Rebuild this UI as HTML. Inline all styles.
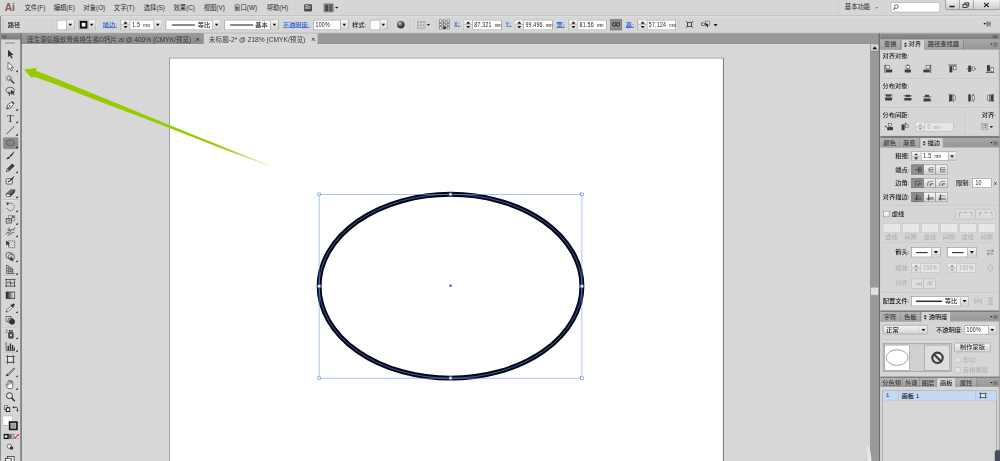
<!DOCTYPE html><html lang="zh-CN"><head><meta charset="utf-8"><title>Adobe Illustrator</title><style>
html,body{margin:0;padding:0;background:#d6d6d6;overflow:hidden}
body{width:1000px;height:461px;position:relative}
#r{position:absolute;left:0;top:0;width:1920px;height:885px;transform:scale(0.5208333);transform-origin:0 0;filter:blur(0.55px);font:12px "Liberation Sans","Noto Sans CJK SC",sans-serif;color:#1c1c1c;overflow:hidden}
#r div,#r span,#r svg{position:absolute;box-sizing:border-box}
.t{white-space:nowrap;line-height:16px;height:16px;font-weight:500}
.m{font-size:12.2px;color:#2b2b2b;font-weight:400}
.bl{color:#2a5bd7;text-decoration:underline}
.f{background:#fff;border:1px solid #787878;box-shadow:0 0 0 1px rgba(255,255,255,.35)}
.fd{background:#e6e6e6;border:1px solid #b4b4b4}
.g{background:linear-gradient(#f6f6f6,#cfcfcf);border-left:1px solid #868686}
.gs{background:linear-gradient(#f6f6f6,#d4d4d4);border-right:1px solid #868686}
.mono{font:12.5px "Liberation Sans",sans-serif;transform:scaleX(.8);transform-origin:0 50%;color:#1a1a1a;white-space:nowrap;line-height:14px;letter-spacing:.55px;word-spacing:3.500px;padding-left:1px}
.mono i{font-size:10px;font-style:normal;letter-spacing:-.6px}
.sep{width:1px;background:#bdbdbd;box-shadow:1px 0 0 #e6e6e6}
.hs{height:1px;background:#bcbcbc;box-shadow:0 1px 0 #e4e4e4}
.tab{height:18px;border-right:1px solid #7a7a7a;background:linear-gradient(#b4b4b4,#a2a2a2);color:#3a3a3a;line-height:18px;white-space:nowrap;text-align:center;font-size:12px;font-weight:500}
.tab.on{background:#d6d6d6;color:#1a1a1a;border-right:1px solid #8a8a8a}
.ph{background:linear-gradient(#9c9c9c,#909090)}
.dis{color:#b3b3b3}
.btn{background:linear-gradient(#f4f4f4,#d2d2d2);border:1px solid #909090}
.btn.on{background:#8d8d8d;border-color:#6e6e6e}
</style></head><body><div id="r">
<div class="" style="left:0.0px;top:0.0px;width:1920.0px;height:30.0px;background:#d6d6d6"></div>
<span style="left:9px;top:1px;font:bold 22px/28px 'Liberation Sans',sans-serif;color:#7d5f52;letter-spacing:-0.3px;transform:scaleX(.9);transform-origin:0 0">Ai</span>
<span class="t m" style="left:47.0px;top:7.0px;">文件(F)</span>
<span class="t m" style="left:103.0px;top:7.0px;">编辑(E)</span>
<span class="t m" style="left:160.0px;top:7.0px;">对象(O)</span>
<span class="t m" style="left:218.5px;top:7.0px;">文字(T)</span>
<span class="t m" style="left:276.0px;top:7.0px;">选择(S)</span>
<span class="t m" style="left:333.0px;top:7.0px;">效果(C)</span>
<span class="t m" style="left:391.0px;top:7.0px;">视图(V)</span>
<span class="t m" style="left:449.5px;top:7.0px;">窗口(W)</span>
<span class="t m" style="left:512.0px;top:7.0px;">帮助(H)</span>
<div class="sep" style="left:566.0px;top:6.0px;width:1.0px;height:18.0px;"></div>
<div class="" style="left:583.5px;top:7.5px;width:15.5px;height:14.0px;background:#4d4d4d;border-radius:2px;color:#d8d8d8;font:bold 9px/14px 'Liberation Sans',sans-serif;text-align:center">Br</div>
<svg style="left:621px;top:6px" width="20" height="18"><rect x=".5" y=".5" width="19" height="17" rx="2" fill="#8a8a8a" stroke="#777"/><rect x="3" y="3" width="6" height="12" fill="#4a4a4a"/><rect x="11" y="3" width="6" height="3" fill="#4a4a4a"/><rect x="11" y="7.5" width="6" height="3" fill="#4a4a4a"/><rect x="11" y="12" width="6" height="3" fill="#4a4a4a"/></svg>
<svg style="left:642.5px;top:13.0px" width="7" height="4"><path d="M0 0L7 0L3.5 4Z" fill="#111"/></svg>
<div class="sep" style="left:1609.0px;top:4.0px;width:1.0px;height:22.0px;opacity:.6"></div>
<span class="t m" style="left:1622.0px;top:5.5px;">基本功能</span>
<svg style="left:1680.5px;top:13.5px" width="5" height="3"><path d="M0 0L5 0L2.5 3Z" fill="#333"/></svg>
<div class="sep" style="left:1694.0px;top:4.0px;width:1.0px;height:22.0px;opacity:.6"></div>
<div class="" style="left:1709.5px;top:4.0px;width:95.0px;height:20.0px;background:#fff;border:1px solid #8e8e8e;border-radius:2px;box-shadow:inset 0 1px 1px #ddd,0 0 0 1px #e4e4e4"></div>
<svg style="left:1712px;top:6px" width="16" height="16"><circle cx="9" cy="6.5" r="3.6" fill="none" stroke="#444" stroke-width="1.4"/><path d="M6.4 9.2L2.5 13.5" stroke="#444" stroke-width="1.8"/></svg>
<div class="" style="left:1814.5px;top:-2.0px;width:106.0px;height:20.6px;background:linear-gradient(#f2f2f2,#cdcdcd);border:1px solid #6a6a6a;border-radius:0 0 4px 4px"></div>
<div class="" style="left:1841.5px;top:0.0px;width:1.0px;height:17.0px;background:#6a6a6a"></div>
<div class="" style="left:1868.0px;top:0.0px;width:1.0px;height:17.0px;background:#6a6a6a"></div>
<div class="" style="left:1823.0px;top:10.5px;width:10.0px;height:3.0px;background:#222"></div>
<svg style="left:1847px;top:3px" width="16" height="14"><rect x="5.500" y="2.500" width="7.500" height="6" fill="none" stroke="#222" stroke-width="1.600"/><rect x="2" y="5.300" width="7.500" height="6" fill="#ddd" stroke="#222" stroke-width="1.600"/></svg>
<svg style="left:1888px;top:3.500px" width="12" height="11"><path d="M1.500 1.500L10.500 9.500M10.500 1.500L1.500 9.500" stroke="#222" stroke-width="2.200"/></svg>
<div class="" style="left:0.0px;top:29.5px;width:1920.0px;height:1.3px;background:#a9a9a9"></div>
<div class="" style="left:0.0px;top:30.8px;width:1920.0px;height:1.2px;background:#e6e6e6"></div>
<div class="" style="left:0.0px;top:31.0px;width:1.0px;height:33.0px;background:#9a9a9a"></div>
<div class="" style="left:6.0px;top:37.0px;width:1.0px;height:21.0px;background:#a6a6a6;box-shadow:1px 0 0 #efefef"></div>
<span class="t " style="left:15.0px;top:38.5px;color:#222">路径</span>
<div class="sep" style="left:101.0px;top:36.0px;width:1.0px;height:22.0px;"></div>
<div class="f" style="left:108.5px;top:37.5px;width:34.5px;height:20.0px">
<div class="g" style="right:0;top:0;width:15.0px;height:18.0px"></div>
<svg style="left:21.5px;top:6.5px" width="8" height="5"><path d="M0 0L8 0L4.0 5Z" fill="#111"/></svg>
</div>
<div class="f" style="left:150.0px;top:37.5px;width:34.0px;height:20.0px">
<div class="g" style="right:0;top:0;width:14.5px;height:18.0px"></div>
<svg style="left:21.2px;top:6.5px" width="8" height="5"><path d="M0 0L8 0L4.0 5Z" fill="#111"/></svg>
<div style="left:0;top:0;width:18.5px;height:18px;background:#cfcfcf"></div><div style="left:2px;top:1.5px;width:15px;height:15px;background:#fff;border:4.5px solid #111"></div>
</div>
<span class="t bl" style="left:197.5px;top:38.8px;">描边:</span>
<div class="f" style="left:231.0px;top:37.5px;width:79.5px;height:20.0px">
<div class="gs" style="left:0;top:0;width:18.0px;height:18.0px;"></div>
<svg style="left:4.5px;top:2.5px" width="8" height="4.5"><path d="M0 4.5L4.0 0L8 4.5Z" fill="#1a1a1a"/></svg>
<svg style="left:4.5px;top:11.0px" width="8" height="4.5"><path d="M0 0L8 0L4.0 4.5Z" fill="#1a1a1a"/></svg>
<div class="" style="left:0.0px;top:8.5px;width:17.0px;height:1.0px;background:#9a9a9a"></div>
<div class="g" style="right:0;top:0;width:15.0px;height:18.0px"></div>
<svg style="left:66.5px;top:6.5px" width="8" height="5"><path d="M0 0L8 0L4.0 5Z" fill="#111"/></svg>
<span class="mono" style="left:21.0px;top:1.6px;">1.5 <i>mm</i></span>
</div>
<div class="f" style="left:317.5px;top:37.5px;width:106.5px;height:20.0px">
<div class="g" style="right:0;top:0;width:15.0px;height:18.0px"></div>
<svg style="left:93.5px;top:6.5px" width="8" height="5"><path d="M0 0L8 0L4.0 5Z" fill="#111"/></svg>
<span class="t " style="left:61.0px;top:1.0px;">等比</span>
<div style="left:11px;top:8.5px;width:44px;height:2px;background:#222"></div>
</div>
<div class="f" style="left:431.0px;top:37.5px;width:104.0px;height:20.0px">
<div class="g" style="right:0;top:0;width:15.0px;height:18.0px"></div>
<svg style="left:91.0px;top:6.5px" width="8" height="5"><path d="M0 0L8 0L4.0 5Z" fill="#111"/></svg>
<span class="t " style="left:58.0px;top:1.0px;">基本</span>
<div style="left:10px;top:8.5px;width:44px;height:2px;background:#222"></div>
</div>
<span class="t bl" style="left:543.0px;top:38.8px;">不透明度:</span>
<div class="f" style="left:601.0px;top:37.5px;width:67.5px;height:20.0px">
<div class="g" style="right:0;top:0;width:15.0px;height:18.0px"></div>
<svg style="left:54.5px;top:6.5px" width="8" height="5"><path d="M0 0L8 0L4.0 5Z" fill="#111"/></svg>
<span class="mono" style="left:3.0px;top:1.6px;">100%</span>
</div>
<span class="t " style="left:676.0px;top:38.8px;color:#222">样式:</span>
<div class="f" style="left:709.5px;top:37.5px;width:34.5px;height:20.0px">
<div class="g" style="right:0;top:0;width:14.5px;height:18.0px"></div>
<svg style="left:21.8px;top:6.5px" width="8" height="5"><path d="M0 0L8 0L4.0 5Z" fill="#111"/></svg>
</div>
<div class="sep" style="left:750.0px;top:36.0px;width:1.0px;height:22.0px;"></div>
<svg style="left:761px;top:39px" width="17" height="17"><defs><radialGradient id="gl" cx=".35" cy=".3" r=".8"><stop offset="0" stop-color="#cfcfcf"/><stop offset=".5" stop-color="#555"/><stop offset="1" stop-color="#1a1a1a"/></radialGradient></defs><circle cx="8.500" cy="8.500" r="6.800" fill="url(#gl)" stroke="#333"/></svg>
<div class="sep" style="left:787.5px;top:36.0px;width:1.0px;height:22.0px;"></div>
<svg style="left:801px;top:40px" width="16" height="16" fill="none"><rect x=".7" y=".7" width="14.600" height="14.600" stroke="#555" stroke-width="1.200" stroke-dasharray="1.700 1.550"/><g fill="#f6f6f6" stroke="#7a7a7a" stroke-width=".7"><rect x="3.200" y="3.200" width="3.800" height="3.800"/><rect x="9" y="3.200" width="3.800" height="3.800"/><rect x="3.200" y="9" width="3.800" height="3.800"/><rect x="9" y="9" width="3.800" height="3.800"/></g></svg>
<svg style="left:818.5px;top:46.0px" width="7" height="4"><path d="M0 0L7 0L3.5 4Z" fill="#333"/></svg>
<div class="sep" style="left:836.5px;top:36.0px;width:1.0px;height:22.0px;"></div>
<svg style="left:843px;top:37px" width="21" height="20" fill="#e4e4e4" stroke="#555" stroke-width="1"><rect x="1.0" y="1.0" width="4.6" height="4.6" fill="#e4e4e4"/><rect x="1.0" y="7.6" width="4.6" height="4.6" fill="#e4e4e4"/><rect x="1.0" y="14.2" width="4.6" height="4.6" fill="#e4e4e4"/><rect x="8.2" y="1.0" width="4.6" height="4.6" fill="#e4e4e4"/><rect x="8.2" y="7.6" width="4.6" height="4.6" fill="#e4e4e4"/><rect x="8.2" y="14.2" width="4.6" height="4.6" fill="#222"/><rect x="15.4" y="1.0" width="4.6" height="4.6" fill="#e4e4e4"/><rect x="15.4" y="7.6" width="4.6" height="4.6" fill="#e4e4e4"/><rect x="15.4" y="14.2" width="4.6" height="4.6" fill="#e4e4e4"/><path d="M5.6 3.3h2.6M12.8 3.3h2.6M5.6 9.9h2.6M12.8 9.9h2.6M5.6 16.5h2.6M12.8 16.5h2.6M3.3 5.6v1M3.3 12.2v1M10.5 5.6v1M10.5 12.2v1M17.7 5.6v1M17.7 12.2v1" stroke="#666"/></svg>
<span class="t bl" style="left:872.0px;top:38.8px;font-family:'Liberation Mono',monospace;font-weight:bold;font-size:10px">X:</span>
<div class="f" style="left:889.3px;top:37.5px;width:74.0px;height:20.0px">
<div class="gs" style="left:0;top:0;width:18.0px;height:18.0px;"></div>
<svg style="left:4.5px;top:2.5px" width="8" height="4.5"><path d="M0 4.5L4.0 0L8 4.5Z" fill="#1a1a1a"/></svg>
<svg style="left:4.5px;top:11.0px" width="8" height="4.5"><path d="M0 0L8 0L4.0 4.5Z" fill="#1a1a1a"/></svg>
<div class="" style="left:0.0px;top:8.5px;width:17.0px;height:1.0px;background:#9a9a9a"></div>
<span class="mono" style="left:20.0px;top:1.6px;">87.321 <i>mm</i></span>
</div>
<span class="t bl" style="left:971.0px;top:38.8px;font-family:'Liberation Mono',monospace;font-weight:bold;font-size:10px">Y:</span>
<div class="f" style="left:987.3px;top:37.5px;width:74.0px;height:20.0px">
<div class="gs" style="left:0;top:0;width:18.0px;height:18.0px;"></div>
<svg style="left:4.5px;top:2.5px" width="8" height="4.5"><path d="M0 4.5L4.0 0L8 4.5Z" fill="#1a1a1a"/></svg>
<svg style="left:4.5px;top:11.0px" width="8" height="4.5"><path d="M0 0L8 0L4.0 4.5Z" fill="#1a1a1a"/></svg>
<div class="" style="left:0.0px;top:8.5px;width:17.0px;height:1.0px;background:#9a9a9a"></div>
<span class="mono" style="left:20.0px;top:1.6px;">99.496 <i>mm</i></span>
</div>
<span class="t bl" style="left:1068.5px;top:38.8px;font-weight:bold">宽:</span>
<div class="f" style="left:1091.0px;top:37.5px;width:74.0px;height:20.0px">
<div class="gs" style="left:0;top:0;width:18.0px;height:18.0px;"></div>
<svg style="left:4.5px;top:2.5px" width="8" height="4.5"><path d="M0 4.5L4.0 0L8 4.5Z" fill="#1a1a1a"/></svg>
<svg style="left:4.5px;top:11.0px" width="8" height="4.5"><path d="M0 0L8 0L4.0 4.5Z" fill="#1a1a1a"/></svg>
<div class="" style="left:0.0px;top:8.5px;width:17.0px;height:1.0px;background:#9a9a9a"></div>
<span class="mono" style="left:20.0px;top:1.6px;">81.56 <i>mm</i></span>
</div>
<div class="" style="left:1172.0px;top:36.5px;width:21.5px;height:21.0px;background:#8b8b8b;border:1px solid #6f6f6f"></div>
<svg style="left:1175px;top:42px" width="16" height="10" fill="none" stroke="#2a2a2a" stroke-width="1.8"><rect x="1" y="1.5" width="7" height="6.5" rx="3"/><rect x="8" y="1.5" width="7" height="6.5" rx="3"/></svg>
<span class="t bl" style="left:1201.5px;top:38.8px;font-weight:bold">高:</span>
<div class="f" style="left:1224.0px;top:37.5px;width:74.0px;height:20.0px">
<div class="gs" style="left:0;top:0;width:18.0px;height:18.0px;"></div>
<svg style="left:4.5px;top:2.5px" width="8" height="4.5"><path d="M0 4.5L4.0 0L8 4.5Z" fill="#1a1a1a"/></svg>
<svg style="left:4.5px;top:11.0px" width="8" height="4.5"><path d="M0 0L8 0L4.0 4.5Z" fill="#1a1a1a"/></svg>
<div class="" style="left:0.0px;top:8.5px;width:17.0px;height:1.0px;background:#9a9a9a"></div>
<span class="mono" style="left:20.0px;top:1.6px;">57.124 <i>mm</i></span>
</div>
<div class="sep" style="left:1304.5px;top:36.0px;width:1.0px;height:22.0px;"></div>
<svg style="left:1316px;top:39px" width="16" height="16" fill="none" stroke="#222" stroke-width="1.5"><rect x="4" y="4.5" width="8" height="7"/><path d="M4 4.5L1 1.5M12 4.5L15 1.5M4 11.5L1 14.5M12 11.5L15 14.5"/></svg>
<svg style="left:1346px;top:39px" width="18" height="16" fill="none" stroke="#333" stroke-width="1.2"><rect x="8.5" y="1.5" width="8" height="8" stroke-dasharray="2 1"/><rect x="1" y="5" width="6" height="5" fill="#ddd"/><path d="M9 5L15 9L12.4 9.6L13.8 13L12.4 13.6L11 10.4L9 12Z" fill="#222" stroke="none"/></svg>
<svg style="left:1370.0px;top:45.5px" width="8" height="5"><path d="M0 0L8 0L4.0 5Z" fill="#111"/></svg>
<svg style="left:1888px;top:41px" width="16" height="10"><path d="M0 3h5L2.500 6.500Z" fill="#111"/><path d="M8.500 1.500h6M8.500 4h6M8.500 6.500h6M8.500 9h6" stroke="#444" stroke-width="1.200"/><path d="M7 0v10" stroke="#222" stroke-width="1.300"/></svg>
<div class="" style="left:0.0px;top:63.0px;width:1920.0px;height:1.0px;background:#9f9f9f"></div>
<div class="" style="left:0.0px;top:63.5px;width:1690.0px;height:21.0px;background:#989898;border-top:1px solid #a3a3a3;border-bottom:1.500px solid #858585"></div>
<div class="" style="left:0.0px;top:64.0px;width:40.0px;height:11.5px;background:linear-gradient(#909090,#7e7e7e)"></div>
<svg style="left:4px;top:66.5px" width="10" height="7"><path d="M.5 .5L3.5 3.5L.5 6.5M5 .5L8 3.5L5 6.5" fill="none" stroke="#333" stroke-width="1.5"/></svg>
<div class="" style="left:41.0px;top:64.0px;width:350.0px;height:20.0px;background:linear-gradient(#9a9a9a,#8c8c8c);border-right:1px solid #727272;border-left:1px solid #777"></div>
<span class="t " style="left:52.0px;top:67.6px;color:#3a3a3a;font-size:12.6px;font-weight:400">莲生源氨糖软骨素维生素D钙片.ai @ 400% (CMYK/预览)</span>
<svg style="left:376px;top:71.5px" width="7" height="7"><path d="M.5 .5L6.500 6.500M6.500 .5L.5 6.500" stroke="#222" stroke-width="1.500"/></svg>
<div class="" style="left:391.0px;top:64.0px;width:220.0px;height:21.0px;background:#d6d6d6;border-right:1px solid #7a7a7a"></div>
<span class="t " style="left:401.0px;top:67.6px;color:#3a3a3a;font-size:12.75px;font-weight:400">未标题-2* @ 218% (CMYK/预览)</span>
<svg style="left:598px;top:71.5px" width="7" height="7"><path d="M.5 .5L6.500 6.500M6.500 .5L.5 6.500" stroke="#222" stroke-width="1.500"/></svg>
<div class="" style="left:41.0px;top:84.5px;width:1630.0px;height:801.0px;background:#d7d7d7"></div>
<div class="" style="left:41.0px;top:85.0px;width:1630.0px;height:1.0px;background:#eeeeee"></div>
<div class="" style="left:324.5px;top:110.6px;width:1065.0px;height:800.0px;background:#fff;border:1px solid #555;border-right:2px solid #7b7b7b;border-top-color:#666"></div>
<svg style="left:0;top:0" width="1920" height="885" viewBox="0 0 1920 885"><ellipse cx="865.0" cy="549.6" rx="252.3" ry="176.5" fill="none" stroke="#06060c" stroke-width="9.4"/><ellipse cx="865.0" cy="549.6" rx="252.3" ry="176.5" fill="none" stroke="#3560d8" stroke-width="1.7"/><rect x="612.7" y="373.1" width="504.6" height="353.0" fill="none" stroke="#6f95f5" stroke-width="1.1"/><rect x="610.2" y="370.6" width="5" height="5" fill="#fff" stroke="#4a78ee" stroke-width="1.1"/><rect x="1114.8" y="370.6" width="5" height="5" fill="#fff" stroke="#4a78ee" stroke-width="1.1"/><rect x="610.2" y="723.6" width="5" height="5" fill="#fff" stroke="#4a78ee" stroke-width="1.1"/><rect x="1114.8" y="723.6" width="5" height="5" fill="#fff" stroke="#4a78ee" stroke-width="1.1"/><rect x="862.4" y="370.5" width="5.2" height="5.2" fill="#fff" stroke="#4a78ee" stroke-width="1.1"/><rect x="862.4" y="723.5" width="5.2" height="5.2" fill="#fff" stroke="#4a78ee" stroke-width="1.1"/><rect x="610.1" y="547.0" width="5.2" height="5.2" fill="#fff" stroke="#4a78ee" stroke-width="1.1"/><rect x="1114.7" y="547.0" width="5.2" height="5.2" fill="#fff" stroke="#4a78ee" stroke-width="1.1"/><rect x="862.7" y="546.3000000000001" width="4.6" height="4.6" fill="#3f74f0"/></svg>
<div class="" style="left:1671.0px;top:84.5px;width:16.0px;height:801.0px;background:#9a9a9a;border-left:1px solid #8a8a8a"></div>
<div class="" style="left:1672.0px;top:85.0px;width:14.5px;height:14.0px;background:linear-gradient(#d6d6d6,#c6c6c6);border-bottom:1px solid #777"></div>
<svg style="left:1674.5px;top:89.0px" width="9" height="6"><path d="M0 6L4.5 0L9 6Z" fill="#111"/></svg>
<div class="" style="left:1672.0px;top:551.0px;width:14.5px;height:15.5px;background:#e2e2e2;border-top:1px solid #8a8a8a;border-bottom:1px solid #8a8a8a"></div>
<div class="" style="left:1686.5px;top:64.0px;width:3.5px;height:821.0px;background:#6d6d6d"></div>
<svg style="left:1660px;top:850px" width="16" height="36"><path d="M5 5L8.500 8L12 22L13.500 36H6.500L5.500 20Z" fill="#e9e9e9"/></svg>
<div class="" style="left:0.0px;top:75.5px;width:39.0px;height:810.0px;background:#d6d6d6"></div>
<div class="" style="left:38.6px;top:64.0px;width:3.4px;height:821.0px;background:#767676"></div>
<div class="" style="left:0.0px;top:31.0px;width:1.5px;height:854.0px;background:#8e8e8e"></div>
<div class="" style="left:10.0px;top:80.6px;width:19.0px;height:3.0px;background:#a0a0a0;box-shadow:0 1px 0 #e6e6e6"></div>
<div class="" style="left:5.0px;top:188.0px;width:29.0px;height:1.0px;background:#b2b2b2;box-shadow:0 1px 0 #ececec"></div>
<div class="" style="left:5.0px;top:383.0px;width:29.0px;height:1.0px;background:#b2b2b2;box-shadow:0 1px 0 #ececec"></div>
<div class="" style="left:5.0px;top:529.0px;width:29.0px;height:1.0px;background:#b2b2b2;box-shadow:0 1px 0 #ececec"></div>
<div class="" style="left:5.0px;top:628.0px;width:29.0px;height:1.0px;background:#b2b2b2;box-shadow:0 1px 0 #ececec"></div>
<div class="" style="left:5.0px;top:677.0px;width:29.0px;height:1.0px;background:#b2b2b2;box-shadow:0 1px 0 #ececec"></div>
<div class="" style="left:5.5px;top:263.5px;width:29.5px;height:22.5px;background:#8f8f8f;border:1px solid #787878;border-radius:2px"></div>
<svg style="left:8.5px;top:93.0px" width="22" height="22" viewBox="0 0 24 24"><path d="M7 2.5L7 18.5L10.8 14.8L13.6 21L16.4 19.8L13.6 13.8L18.6 13.6Z" fill="#333333"/></svg>
<svg style="left:8.5px;top:117.0px" width="22" height="22" viewBox="0 0 24 24"><path d="M7 2.5L7 18.5L10.8 14.8L13.6 21L16.4 19.8L13.6 13.8L18.6 13.6Z" fill="#fff" stroke="#333333" stroke-width="1.3"/></svg>
<svg style="left:29.5px;top:134.0px" width="4.500" height="4.500"><path d="M4.500 0V4.500H0Z" fill="#0c0c0c"/></svg>
<svg style="left:8.5px;top:141.0px" width="22" height="22" viewBox="0 0 24 24"><path d="M11 12L20 21" stroke="#333333" stroke-width="2.6"/><path d="M9 3v4M9 13v4M2 10h4M12 10h4M4.2 5.2l2.6 2.6M13.8 5.2l-2.6 2.6M4.2 14.8l2.6-2.6" stroke="#333333" stroke-width="1.5"/></svg>
<svg style="left:8.5px;top:165.0px" width="22" height="22" viewBox="0 0 24 24"><ellipse cx="11.500" cy="9" rx="8.500" ry="6" fill="none" stroke="#444" stroke-width="1.600"/><path d="M8 12c-2 2 0 5 2 4s0-4-2-2M10 16v5" fill="none" stroke="#333333" stroke-width="1.6"/><path d="M13 8l0 11l3-3l3 3.4l1.6-1.4l-3-3.4l3.6-.6z" fill="#333333"/></svg>
<svg style="left:8.5px;top:191.0px" width="22" height="22" viewBox="0 0 24 24"><path d="M4 20L6.5 11L14 6L18 10L13 17.5Z" fill="#fff" stroke="#333333" stroke-width="1.6"/><path d="M4 20L10.5 13.5" stroke="#333333" stroke-width="1.3"/><circle cx="11" cy="13" r="1.5" fill="#333333"/><path d="M14.5 4.5L19.5 9.5L21 8L16 3Z" fill="#333333"/></svg>
<svg style="left:29.5px;top:208.0px" width="4.500" height="4.500"><path d="M4.500 0V4.500H0Z" fill="#0c0c0c"/></svg>
<svg style="left:8.5px;top:215.0px" width="22" height="22" viewBox="0 0 24 24"><text x="12" y="20" text-anchor="middle" font-family="Liberation Serif,serif" font-size="23" fill="#333333">T</text></svg>
<svg style="left:29.5px;top:232.0px" width="4.500" height="4.500"><path d="M4.500 0V4.500H0Z" fill="#0c0c0c"/></svg>
<svg style="left:8.5px;top:239.0px" width="22" height="22" viewBox="0 0 24 24"><path d="M4 20L20 4" stroke="#333333" stroke-width="1.8"/></svg>
<svg style="left:29.5px;top:256.0px" width="4.500" height="4.500"><path d="M4.500 0V4.500H0Z" fill="#0c0c0c"/></svg>
<svg style="left:8.5px;top:263.0px" width="22" height="22" viewBox="0 0 24 24"><ellipse cx="12" cy="12.300" rx="9" ry="6.200" fill="#858585" stroke="#444" stroke-width="1.400"/></svg>
<svg style="left:29.5px;top:280.0px" width="4.500" height="4.500"><path d="M4.500 0V4.500H0Z" fill="#0c0c0c"/></svg>
<svg style="left:8.5px;top:287.0px" width="22" height="22" viewBox="0 0 24 24"><path d="M21 3C17 6 12 11 10 14l2 2C15 13 19 8 21 3Z" fill="#333333"/><path d="M9 15c-3 0-3 3-6 5c3 1 7 0 8-3Z" fill="#333333"/></svg>
<svg style="left:8.5px;top:311.0px" width="22" height="22" viewBox="0 0 24 24"><path d="M4 20l1.6-5.6L16 4l4 4L9.6 18.4Z" fill="#4a4a4a" stroke="#333333" stroke-width="1.5"/><path d="M14 6l4 4" stroke="#333333" stroke-width="3.5"/><path d="M4 20l1.6-5.6l4 4z" fill="#fff" stroke="#333333" stroke-width="1"/></svg>
<svg style="left:29.5px;top:328.0px" width="4.500" height="4.500"><path d="M4.500 0V4.500H0Z" fill="#0c0c0c"/></svg>
<svg style="left:8.5px;top:335.0px" width="22" height="22" viewBox="0 0 24 24"><rect x="3" y="9" width="13" height="11" rx="2" fill="#fff" stroke="#333333" stroke-width="1.6"/><path d="M21 3C17 5 12 9 10 12l2 2C15 12 19 7 21 3Z" fill="#333333"/><path d="M9.5 12.5c-2 0-2.5 2-4.5 3.4c2 1 5.6.4 6.5-1.9Z" fill="#333333"/></svg>
<svg style="left:8.5px;top:359.0px" width="22" height="22" viewBox="0 0 24 24"><path d="M3 15L12 6h9L12 15Z" fill="#777" stroke="#333333" stroke-width="1.2"/><path d="M3 15h9v5H3Z" fill="#fff" stroke="#333333" stroke-width="1.2"/><path d="M12 15l9-9v5l-9 9Z" fill="#444" stroke="#333333" stroke-width="1.2"/></svg>
<svg style="left:29.5px;top:376.0px" width="4.500" height="4.500"><path d="M4.500 0V4.500H0Z" fill="#0c0c0c"/></svg>
<svg style="left:8.5px;top:386.0px" width="22" height="22" viewBox="0 0 24 24"><path d="M8 5.5A8 8 0 1 1 4.5 14" fill="none" stroke="#444" stroke-width="1.500" stroke-dasharray="2.600 1.400"/><path d="M3 3l7 1l-4.6 5z" fill="#333333"/></svg>
<svg style="left:29.5px;top:403.0px" width="4.500" height="4.500"><path d="M4.500 0V4.500H0Z" fill="#0c0c0c"/></svg>
<svg style="left:8.5px;top:410.0px" width="22" height="22" viewBox="0 0 24 24"><rect x="3" y="10" width="11" height="10" fill="#bbb" stroke="#333333" stroke-width="1.3"/><rect x="8" y="4" width="13" height="11" fill="none" stroke="#333333" stroke-width="1.3" stroke-dasharray="2 1.4"/><path d="M12 12l7-6m0 0h-4m4 0v4" fill="none" stroke="#333333" stroke-width="1.5"/></svg>
<svg style="left:29.5px;top:427.0px" width="4.500" height="4.500"><path d="M4.500 0V4.500H0Z" fill="#0c0c0c"/></svg>
<svg style="left:8.5px;top:434.0px" width="22" height="22" viewBox="0 0 24 24"><path d="M3 17c4-9 6 3 9-6s5 4 9-8" fill="none" stroke="#333333" stroke-width="1.7"/><path d="M6 21c3-6 5 0 7-5s4 1 7-4" fill="none" stroke="#333333" stroke-width="1.4"/><path d="M9 3v7M6 7l3 3l3-3" fill="none" stroke="#333333" stroke-width="1.6"/></svg>
<svg style="left:29.5px;top:451.0px" width="4.500" height="4.500"><path d="M4.500 0V4.500H0Z" fill="#0c0c0c"/></svg>
<svg style="left:8.5px;top:458.0px" width="22" height="22" viewBox="0 0 24 24"><rect x="8" y="5" width="13" height="14" fill="none" stroke="#333333" stroke-width="1.4" stroke-dasharray="2.2 1.6"/><path d="M3 4l0 11l3-3l2.4 4l1.6-1l-2.2-4l4-.4z" fill="#333333"/></svg>
<svg style="left:8.5px;top:482.0px" width="22" height="22" viewBox="0 0 24 24"><circle cx="9" cy="9" r="6.5" fill="#ddd" stroke="#333333" stroke-width="1.4"/><circle cx="14" cy="12" r="6.5" fill="none" stroke="#333333" stroke-width="1.4"/><path d="M12 12l0 9l2.6-2.4l2.4 3.2l1.4-1l-2.4-3.2l3.4-.4z" fill="#333333"/></svg>
<svg style="left:29.5px;top:499.0px" width="4.500" height="4.500"><path d="M4.500 0V4.500H0Z" fill="#0c0c0c"/></svg>
<svg style="left:8.5px;top:506.0px" width="22" height="22" viewBox="0 0 24 24"><path d="M4 3v18h17M4 3l13 8v10M4 9l13 5M4 15l13 2.6M8.5 5.8V21M13 8.5V21" fill="none" stroke="#333333" stroke-width="1.3"/></svg>
<svg style="left:29.5px;top:523.0px" width="4.500" height="4.500"><path d="M4.500 0V4.500H0Z" fill="#0c0c0c"/></svg>
<svg style="left:8.5px;top:532.0px" width="22" height="22" viewBox="0 0 24 24"><rect x="3" y="5" width="18" height="14" fill="#cfcfcf" stroke="#333333" stroke-width="1.4"/><path d="M3 12c5-3 12 3 18 0M12 5c-3 4 3 9 0 14" fill="none" stroke="#333333" stroke-width="1.2"/><rect x="1.8" y="3.8" width="2.4" height="2.4" fill="#333333"/><rect x="19.8" y="3.8" width="2.4" height="2.4" fill="#333333"/><rect x="1.8" y="17.8" width="2.4" height="2.4" fill="#333333"/><rect x="19.8" y="17.8" width="2.4" height="2.4" fill="#333333"/><rect x="10.8" y="10.8" width="2.4" height="2.4" fill="#333333"/></svg>
<svg style="left:8.5px;top:556.0px" width="22" height="22" viewBox="0 0 24 24"><defs><linearGradient id="gg"><stop offset="0" stop-color="#161616"/><stop offset="1" stop-color="#f4f4f4"/></linearGradient></defs><rect x="3" y="5" width="18" height="14" fill="url(#gg)" stroke="#333333" stroke-width="1.5"/></svg>
<svg style="left:8.5px;top:580.0px" width="22" height="22" viewBox="0 0 24 24"><path d="M3 21l1.4-4.4L13 8l3 3l-8.6 8.6Z" fill="#fff" stroke="#333333" stroke-width="1.4"/><path d="M12 6l6 6l1.6-1.6l-1.4-1.4l2.4-2.4a2.3 2.3 0 0 0-3.2-3.2L15 5.8l-1.4-1.4Z" fill="#333333"/></svg>
<svg style="left:29.5px;top:597.0px" width="4.500" height="4.500"><path d="M4.500 0V4.500H0Z" fill="#0c0c0c"/></svg>
<svg style="left:8.5px;top:604.0px" width="22" height="22" viewBox="0 0 24 24"><rect x="3" y="4" width="10" height="10" fill="#fff" stroke="#333333" stroke-width="1.4"/><rect x="7" y="7.5" width="9" height="9" fill="#bbb" stroke="#333333" stroke-width="1.2"/><circle cx="15.5" cy="15" r="5.5" fill="#333" stroke="#333333" stroke-width="1.2"/></svg>
<svg style="left:8.5px;top:630.0px" width="22" height="22" viewBox="0 0 24 24"><rect x="8" y="9" width="10" height="12" rx="1.5" fill="#555" stroke="#333333" stroke-width="1.4"/><rect x="10" y="5" width="6" height="4" fill="#888" stroke="#333333" stroke-width="1.2"/><path d="M3 6h5M3 3.4h3M2 9h4" stroke="#333333" stroke-width="1.4" stroke-dasharray="1.6 1.2"/><circle cx="13" cy="15" r="2.2" fill="#ddd"/></svg>
<svg style="left:29.5px;top:647.0px" width="4.500" height="4.500"><path d="M4.500 0V4.500H0Z" fill="#0c0c0c"/></svg>
<svg style="left:8.5px;top:654.0px" width="22" height="22" viewBox="0 0 24 24"><path d="M3 3v18h18" fill="none" stroke="#333333" stroke-width="1.5"/><rect x="6" y="11" width="3" height="9" fill="#333333"/><rect x="10.5" y="6" width="3" height="14" fill="#333333"/><rect x="15" y="9" width="3" height="11" fill="#333333"/><rect x="19" y="14" width="2.4" height="6" fill="#333333"/></svg>
<svg style="left:29.5px;top:671.0px" width="4.500" height="4.500"><path d="M4.500 0V4.500H0Z" fill="#0c0c0c"/></svg>
<svg style="left:8.5px;top:679.0px" width="22" height="22" viewBox="0 0 24 24"><rect x="6" y="6" width="12" height="12" fill="#e8e8e8" stroke="#333333" stroke-width="1.4"/><path d="M2 6h20M2 18h20M6 2v20M18 2v20" stroke="#333333" stroke-width="1.1"/></svg>
<svg style="left:8.5px;top:703.0px" width="22" height="22" viewBox="0 0 24 24"><path d="M3 20l3-3L19 4c2 0 2 2 1 3L8 19Z" fill="#ccc" stroke="#333333" stroke-width="1.4"/><path d="M3 21l5.5-2l-3.5-3.5z" fill="#333333"/></svg>
<svg style="left:29.5px;top:720.0px" width="4.500" height="4.500"><path d="M4.500 0V4.500H0Z" fill="#0c0c0c"/></svg>
<svg style="left:8.5px;top:727.0px" width="22" height="22" viewBox="0 0 24 24"><path d="M7.5 21c-2-3-4.6-6-4.6-8c0-1.4 1.800-1.700 2.700-.300L7 14.500V6c0-1.800 2.400-1.800 2.500 0V4.500c0-1.800 2.500-1.800 2.600 0V5.500c0-1.700 2.500-1.700 2.600 0V7.500c0-1.600 2.400-1.600 2.400 0V15c0 3-1.200 4.500-1.800 6Z" fill="#fff" stroke="#333333" stroke-width="1.4"/><path d="M9.500 6v6M12.100 5v7M14.700 6.500v5.500" stroke="#333333" stroke-width="1"/></svg>
<svg style="left:29.5px;top:744.0px" width="4.500" height="4.500"><path d="M4.500 0V4.500H0Z" fill="#0c0c0c"/></svg>
<svg style="left:8.5px;top:751.0px" width="22" height="22" viewBox="0 0 24 24"><circle cx="10" cy="9.5" r="6.2" fill="#e9e9e9" stroke="#333333" stroke-width="2"/><path d="M14.500 14L21 21" stroke="#333333" stroke-width="3.2"/></svg>
<svg style="left:7px;top:778px" width="13" height="13"><rect x="1" y="1" width="7" height="7" fill="#fff" stroke="#222" stroke-width="1.3"/><rect x="5" y="5" width="7" height="7" fill="#fff" stroke="#222" stroke-width="2.2"/></svg>
<svg style="left:23px;top:778px" width="13" height="13" fill="none" stroke="#222" stroke-width="1.5"><path d="M3 4h5c2 0 2.500 1 2.500 2.500V11"/><path d="M.8 4L4 1.500V6.500Z" fill="#222" stroke="none"/><path d="M10.500 12.500L8 9.500h5Z" fill="#222" stroke="none"/></svg>
<div class="" style="left:5.0px;top:797.5px;width:20.0px;height:19.0px;background:#fff;border:1px solid #8a8a8a;box-shadow:0 0 0 1px #e8e8e8"></div>
<div class="" style="left:16.5px;top:808.5px;width:17.0px;height:17.0px;background:#9c9c9c;border:3px solid #161616;box-shadow:0 0 0 1px #e2e2e2,inset 0 0 0 1px #cfcfcf"></div>
<div class="" style="left:6.5px;top:833.0px;width:10.0px;height:9.5px;background:#151515"></div>
<div class="" style="left:9.3px;top:835.6px;width:4.4px;height:4.4px;background:#fff"></div>
<div class="" style="left:17.3px;top:833.0px;width:9.3px;height:9.5px;background:linear-gradient(90deg,#222,#eee);border:1px solid #666"></div>
<svg style="left:27.300px;top:833px" width="10" height="10"><rect x=".5" y=".5" width="9" height="8.500" fill="#fff" stroke="#777"/><path d="M1 8.500L9 1" stroke="#e81818" stroke-width="2.400"/></svg>
<svg style="left:12px;top:851px" width="15" height="13"><circle cx="6" cy="6" r="4.200" fill="#eee" stroke="#444" stroke-width="1.2"/><rect x="7" y="6.500" width="6" height="5.500" fill="#333"/></svg>
<svg style="left:9px;top:875px" width="20" height="14"><rect x="5" y="1.500" width="13" height="10" fill="#eee" stroke="#333" stroke-width="1.5"/><rect x="1.500" y="5" width="11" height="9" fill="#f4f4f4" stroke="#333" stroke-width="1.5"/></svg>
<div class="" style="left:1690.0px;top:64.0px;width:230.0px;height:821.0px;background:#d6d6d6"></div>
<div class="ph" style="left:1690.0px;top:64.0px;width:230.0px;height:12.0px;background:linear-gradient(#8f8f8f,#7f7f7f)"></div>
<svg style="left:1906px;top:67px" width="10" height="7"><path d="M.5 .5L3.5 3.500L.5 6.500M5 .5L8 3.500L5 6.500" fill="none" stroke="#2a2a2a" stroke-width="1.5"/></svg>
<div class="" style="left:1690.0px;top:76.0px;width:230.0px;height:18.5px;background:linear-gradient(#a7a7a7,#979797);border-bottom:1px solid #8a8a8a"></div>
<div class="tab" style="left:1690.5px;top:76.0px;width:39.0px;height:18.5px">变换</div>
<div class="tab on" style="left:1729.5px;top:76.0px;width:45.0px;height:19.5px;border-left:1px solid #8a8a8a"><svg style="left:4px;top:4.500px" width="7" height="10"><path d="M3.500 0L6.500 4H.5ZM3.500 10L6.500 6H.5Z" fill="#333"/></svg><span style="position:absolute;left:14px;top:0">对齐</span></div>
<div class="tab" style="left:1774.5px;top:76.0px;width:75.0px;height:18.5px">路径查找器</div>
<svg style="left:1901px;top:81.0px" width="15" height="9"><path d="M0 2.500h5L2.500 5.500Z" fill="#222"/><path d="M6.500 1h8M6.500 3.300h8M6.500 5.600h8M6.500 7.900h8" stroke="#555" stroke-width="1.100"/></svg>
<span class="t " style="left:1694.6px;top:99.4px;">对齐对象:</span>
<svg style="left:1697px;top:122.500px" width="18" height="18"><path d="M2 1v16" stroke="#3c3c3c" stroke-width="1.6"/><rect x="4" y="3" width="7" height="5" fill="#eee" stroke="#3c3c3c"/><rect x="4" y="10.500" width="12" height="5.500" fill="#3c3c3c"/></svg>
<svg style="left:1734px;top:122.500px" width="18" height="18"><path d="M9 0v18" stroke="#3c3c3c" stroke-width="1.4"/><rect x="5.500" y="3" width="7" height="5" fill="#eee" stroke="#3c3c3c"/><rect x="3" y="10.500" width="12" height="5.500" fill="#3c3c3c"/></svg>
<svg style="left:1771px;top:122.500px" width="18" height="18"><path d="M16 1v16" stroke="#3c3c3c" stroke-width="1.6"/><rect x="7" y="3" width="7" height="5" fill="#eee" stroke="#3c3c3c"/><rect x="2" y="10.500" width="12" height="5.500" fill="#3c3c3c"/></svg>
<svg style="left:1820px;top:122.500px" width="18" height="18"><path d="M1 2h16" stroke="#3c3c3c" stroke-width="1.6"/><rect x="3" y="4" width="5.500" height="12" fill="#3c3c3c"/><rect x="10.500" y="4" width="5" height="7" fill="#eee" stroke="#3c3c3c"/></svg>
<svg style="left:1856px;top:122.500px" width="18" height="18"><path d="M0 9h18" stroke="#3c3c3c" stroke-width="1.4"/><rect x="3" y="3" width="5.500" height="12" fill="#3c3c3c"/><rect x="10.500" y="5.500" width="5" height="7" fill="#eee" stroke="#3c3c3c"/></svg>
<svg style="left:1892px;top:122.500px" width="18" height="18"><path d="M1 16h16" stroke="#3c3c3c" stroke-width="1.6"/><rect x="3" y="2" width="5.500" height="12" fill="#3c3c3c"/><rect x="10.500" y="7" width="5" height="7" fill="#eee" stroke="#3c3c3c"/></svg>
<div class="hs" style="left:1693.0px;top:150.5px;width:221.0px;height:1.0px;"></div>
<span class="t " style="left:1694.6px;top:155.5px;">分布对象:</span>
<svg style="left:1697px;top:179px" width="18" height="18"><path d="M1 3h16M1 9h16" stroke="#3c3c3c" stroke-width="1.3"/><rect x="4" y="3" width="10" height="3.500" fill="#3c3c3c"/><rect x="2.500" y="9" width="13" height="5" fill="#3c3c3c"/></svg>
<svg style="left:1734px;top:179px" width="18" height="18"><path d="M1 5h16M1 11.500h16" stroke="#3c3c3c" stroke-width="1.3"/><rect x="4.500" y="3" width="9" height="4" fill="#3c3c3c"/><rect x="2.500" y="9" width="13" height="5" fill="#3c3c3c"/></svg>
<svg style="left:1771px;top:179px" width="18" height="18"><path d="M1 7h16M1 15h16" stroke="#3c3c3c" stroke-width="1.3"/><rect x="5" y="3" width="8" height="4" fill="#3c3c3c"/><rect x="2.500" y="10" width="13" height="5" fill="#3c3c3c"/></svg>
<svg style="left:1820px;top:179px" width="18" height="18"><path d="M3 1v16M10 1v16" stroke="#3c3c3c" stroke-width="1.3"/><rect x="3" y="2.500" width="5" height="13" fill="#3c3c3c"/><rect x="10" y="5" width="4" height="8" fill="#eee" stroke="#3c3c3c"/></svg>
<svg style="left:1856px;top:179px" width="18" height="18"><path d="M5.500 1v16M12.500 1v16" stroke="#3c3c3c" stroke-width="1.3"/><rect x="3" y="2.500" width="5" height="13" fill="#3c3c3c"/><rect x="10.500" y="5" width="4" height="8" fill="#eee" stroke="#3c3c3c"/></svg>
<svg style="left:1892px;top:179px" width="18" height="18"><path d="M8 1v16M15 1v16" stroke="#3c3c3c" stroke-width="1.3"/><rect x="10" y="2.500" width="5" height="13" fill="#3c3c3c"/><rect x="4" y="5" width="4" height="8" fill="#eee" stroke="#3c3c3c"/></svg>
<div class="hs" style="left:1693.0px;top:205.5px;width:221.0px;height:1.0px;"></div>
<span class="t " style="left:1694.6px;top:211.7px;">分布间距:</span>
<span class="t " style="left:1885.0px;top:211.7px;">对齐:</span>
<div class="sep" style="left:1853.5px;top:213.0px;width:1.0px;height:45.0px;"></div>
<svg style="left:1698px;top:235px" width="18" height="17"><path d="M1 8h4M3 6v4" stroke="#3c3c3c" stroke-width="1.2"/><rect x="7.500" y="2" width="6" height="5" fill="#eee" stroke="#3c3c3c"/><rect x="5.500" y="9" width="11" height="6" fill="#3c3c3c"/></svg>
<svg style="left:1729px;top:235px" width="18" height="17"><rect x="2" y="4" width="6" height="11" fill="#3c3c3c"/><rect x="10" y="5" width="5" height="5" fill="#eee" stroke="#3c3c3c"/><path d="M8 2h4M10 0v4" stroke="#3c3c3c" stroke-width="1.2"/></svg>
<div class="fd" style="left:1757.0px;top:234.0px;width:74.0px;height:18.5px">
<div class="gs" style="left:0;top:0;width:18.0px;height:16.5px;opacity:.55;"></div>
<svg style="left:4.5px;top:1.8px" width="8" height="4.5"><path d="M0 4.5L4.0 0L8 4.5Z" fill="#9a9a9a"/></svg>
<svg style="left:4.5px;top:10.2px" width="8" height="4.5"><path d="M0 0L8 0L4.0 4.5Z" fill="#9a9a9a"/></svg>
<div class="" style="left:0.0px;top:7.8px;width:17.0px;height:1.0px;background:#9a9a9a"></div>
<span class="mono" style="left:22.0px;top:0.8px;color:#a8a8a8;">0 <i>mm</i></span>
</div>
<svg style="left:1883px;top:236px" width="14" height="14" fill="none"><rect x=".7" y=".7" width="12.600" height="12.600" stroke="#555" stroke-width="1.200" stroke-dasharray="1.600 1.550"/><g fill="#f6f6f6" stroke="#7a7a7a" stroke-width=".7"><rect x="2.900" y="2.900" width="3.200" height="3.200"/><rect x="7.900" y="2.900" width="3.200" height="3.200"/><rect x="2.900" y="7.900" width="3.200" height="3.200"/><rect x="7.900" y="7.900" width="3.200" height="3.200"/></g></svg>
<svg style="left:1900.0px;top:241.5px" width="7" height="4"><path d="M0 0L7 0L3.5 4Z" fill="#333"/></svg>
<div class="" style="left:1690.0px;top:261.0px;width:230.0px;height:4.5px;background:#7c7c7c"></div>
<div class="" style="left:1690.0px;top:265.0px;width:230.0px;height:17.5px;background:linear-gradient(#a7a7a7,#979797);border-bottom:1px solid #8a8a8a"></div>
<div class="tab" style="left:1690.5px;top:265.0px;width:36.5px;height:17.5px">颜色</div>
<div class="tab" style="left:1727.0px;top:265.0px;width:39.0px;height:17.5px">渐变</div>
<div class="tab on" style="left:1766.0px;top:265.0px;width:44.5px;height:18.5px;border-left:1px solid #8a8a8a"><svg style="left:4px;top:4.500px" width="7" height="10"><path d="M3.500 0L6.500 4H.5ZM3.500 10L6.500 6H.5Z" fill="#333"/></svg><span style="position:absolute;left:14px;top:0">描边</span></div>
<svg style="left:1901px;top:270.0px" width="15" height="9"><path d="M0 2.500h5L2.500 5.500Z" fill="#222"/><path d="M6.500 1h8M6.500 3.300h8M6.500 5.600h8M6.500 7.900h8" stroke="#555" stroke-width="1.100"/></svg>
<span class="t " style="left:1719.0px;top:291.0px;">粗细:</span>
<div class="f" style="left:1749.7px;top:291.0px;width:86.0px;height:18.0px">
<div class="gs" style="left:0;top:0;width:18.0px;height:16.0px;"></div>
<svg style="left:4.5px;top:1.5px" width="8" height="4.5"><path d="M0 4.5L4.0 0L8 4.5Z" fill="#1a1a1a"/></svg>
<svg style="left:4.5px;top:10.0px" width="8" height="4.5"><path d="M0 0L8 0L4.0 4.5Z" fill="#1a1a1a"/></svg>
<div class="" style="left:0.0px;top:7.5px;width:17.0px;height:1.0px;background:#9a9a9a"></div>
<div class="g" style="right:0;top:0;width:15.0px;height:16.0px"></div>
<svg style="left:73.0px;top:5.5px" width="8" height="5"><path d="M0 0L8 0L4.0 5Z" fill="#111"/></svg>
<span class="mono" style="left:21.0px;top:0.6px;">1.5 <i>mm</i></span>
</div>
<span class="t " style="left:1719.0px;top:317.5px;">端点:</span>
<div class="btn on" style="left:1749.7px;top:316.0px;width:24.0px;height:19.0px;"><svg style="left:4px;top:3px" width="16" height="12"><path d="M3 6h11" stroke="#2a2a2a" stroke-width="1.3"/><path d="M9 1.500v9" stroke="#2a2a2a" stroke-width="1.500"/><path d="M9 2h5v8h-5" fill="none" stroke="#2a2a2a" stroke-width="1"/></svg></div>
<div class="btn" style="left:1772.7px;top:316.0px;width:24.0px;height:19.0px;"><svg style="left:4px;top:3px" width="16" height="12"><path d="M6 6h9" stroke="#2a2a2a" stroke-width="1.3"/><path d="M14 2H9a4 4 0 0 0 0 8h5" fill="none" stroke="#2a2a2a" stroke-width="1"/></svg></div>
<div class="btn" style="left:1795.7px;top:316.0px;width:24.0px;height:19.0px;"><svg style="left:4px;top:3px" width="16" height="12"><path d="M6 6h9" stroke="#2a2a2a" stroke-width="1.3"/><path d="M14 2H5v8h9" fill="none" stroke="#2a2a2a" stroke-width="1"/></svg></div>
<span class="t " style="left:1719.0px;top:343.2px;">边角:</span>
<div class="btn on" style="left:1749.7px;top:342.0px;width:24.0px;height:19.0px;"><svg style="left:4px;top:3px" width="16" height="12"><path d="M3 11V2h11" fill="none" stroke="#2a2a2a" stroke-width="1"/><path d="M8 11V7h6" fill="none" stroke="#2a2a2a" stroke-width="1.500"/></svg></div>
<div class="btn" style="left:1772.7px;top:342.0px;width:24.0px;height:19.0px;"><svg style="left:4px;top:3px" width="16" height="12"><path d="M3 11V7a5 5 0 0 1 5-5h6" fill="none" stroke="#2a2a2a" stroke-width="1"/><path d="M8 11V7h6" fill="none" stroke="#2a2a2a" stroke-width="1.500"/></svg></div>
<div class="btn" style="left:1795.7px;top:342.0px;width:24.0px;height:19.0px;"><svg style="left:4px;top:3px" width="16" height="12"><path d="M3 11V6l4-4h7" fill="none" stroke="#2a2a2a" stroke-width="1"/><path d="M8 11V7h6" fill="none" stroke="#2a2a2a" stroke-width="1.500"/></svg></div>
<span class="t " style="left:1835.5px;top:343.2px;">限制:</span>
<div class="f" style="left:1866.8px;top:342.0px;width:37.5px;height:18.5px">
<span class="mono" style="left:4.0px;top:0.8px;">10</span>
</div>
<span class="t " style="left:1908.5px;top:343.2px;font-size:11px">x</span>
<span class="t " style="left:1694.8px;top:370.0px;">对齐描边:</span>
<div class="btn on" style="left:1749.7px;top:368.5px;width:24.0px;height:19.0px;"><svg style="left:4px;top:3px" width="16" height="13"><path d="M5 0v12M1 9h14" stroke="#2a2a2a" stroke-width="1.500"/><path d="M5 9V4h9" fill="none" stroke="#2a2a2a" stroke-width=".8"/></svg></div>
<div class="btn" style="left:1772.7px;top:368.5px;width:24.0px;height:19.0px;"><svg style="left:4px;top:3px" width="16" height="13"><path d="M5 0v12M1 9h14" stroke="#2a2a2a" stroke-width="1.500"/><path d="M7 9V6h7" fill="none" stroke="#2a2a2a" stroke-width=".8"/></svg></div>
<div class="btn" style="left:1795.7px;top:368.5px;width:24.0px;height:19.0px;"><svg style="left:4px;top:3px" width="16" height="13"><path d="M5 0v12M1 9h14" stroke="#2a2a2a" stroke-width="1.500"/><path d="M3 11V3h11" fill="none" stroke="#2a2a2a" stroke-width=".8"/></svg></div>
<div class="hs" style="left:1693.0px;top:393.5px;width:221.0px;height:1.0px;"></div>
<div class="" style="left:1695.5px;top:405.0px;width:12.0px;height:12.0px;background:linear-gradient(#fff,#e4e4e4);border:1px solid #8a8a8a"></div>
<span class="t " style="left:1712.4px;top:403.0px;">虚线</span>
<div class="" style="left:1834.0px;top:401.0px;width:39.0px;height:20.0px;border:1px solid #b5b5b5;background:#dcdcdc;border-radius:2px"><svg style="left:6px;top:4px" width="26" height="11" fill="none" stroke="#9a9a9a" stroke-width="1.3"><path d="M1 10V2h5M10 2h6M20 2h5v8" /></svg></div>
<div class="" style="left:1873.0px;top:401.0px;width:39.0px;height:20.0px;border:1px solid #b5b5b5;background:#dcdcdc;border-radius:2px"><svg style="left:6px;top:4px" width="26" height="11" fill="none" stroke="#9a9a9a" stroke-width="1.3"><path d="M5 2H1v8M10 2h6M21 2h4v8" /></svg></div>
<div class="" style="left:1695.4px;top:428.5px;width:33.5px;height:18.5px;background:#e7e7e7;border:1px solid #bdbdbd"></div>
<span class="t dis" style="left:1699.9px;top:447.0px;">虚线</span>
<div class="" style="left:1732.2px;top:428.5px;width:33.5px;height:18.5px;background:#e7e7e7;border:1px solid #bdbdbd"></div>
<span class="t dis" style="left:1736.7px;top:447.0px;">间隙</span>
<div class="" style="left:1768.7px;top:428.5px;width:33.5px;height:18.5px;background:#e7e7e7;border:1px solid #bdbdbd"></div>
<span class="t dis" style="left:1773.2px;top:447.0px;">虚线</span>
<div class="" style="left:1805.2px;top:428.5px;width:33.5px;height:18.5px;background:#e7e7e7;border:1px solid #bdbdbd"></div>
<span class="t dis" style="left:1809.7px;top:447.0px;">间隙</span>
<div class="" style="left:1841.6px;top:428.5px;width:33.5px;height:18.5px;background:#e7e7e7;border:1px solid #bdbdbd"></div>
<span class="t dis" style="left:1846.1px;top:447.0px;">虚线</span>
<div class="" style="left:1878.1px;top:428.5px;width:33.5px;height:18.5px;background:#e7e7e7;border:1px solid #bdbdbd"></div>
<span class="t dis" style="left:1882.6px;top:447.0px;">间隙</span>
<div class="hs" style="left:1693.0px;top:466.0px;width:221.0px;height:1.0px;"></div>
<span class="t " style="left:1719.0px;top:476.4px;">箭头:</span>
<div class="f" style="left:1749.7px;top:475.0px;width:56.0px;height:19.0px">
<div class="g" style="right:0;top:0;width:17.0px;height:17.0px"></div>
<svg style="left:42.0px;top:6.0px" width="8" height="5"><path d="M0 0L8 0L4.0 5Z" fill="#111"/></svg>
<div style="left:8px;top:8px;width:22px;height:1.500px;background:#222"></div>
</div>
<div class="f" style="left:1818.8px;top:475.0px;width:56.0px;height:19.0px">
<div class="g" style="right:0;top:0;width:17.0px;height:17.0px"></div>
<svg style="left:42.0px;top:6.0px" width="8" height="5"><path d="M0 0L8 0L4.0 5Z" fill="#111"/></svg>
<div style="left:8px;top:8px;width:22px;height:1.500px;background:#222"></div>
</div>
<svg style="left:1894px;top:477px" width="15" height="15" fill="none" stroke="#777" stroke-width="1.300"><path d="M1 4.500h13M10 1.500l3.500 3l-3.500 3M14 10.500H1M5 7.500l-3.500 3l3.500 3"/></svg>
<span class="t dis" style="left:1719.0px;top:506.0px;">缩放:</span>
<div class="fd" style="left:1749.7px;top:505.0px;width:55.5px;height:19.0px">
<div class="gs" style="left:0;top:0;width:17.0px;height:17.0px;opacity:.55;"></div>
<svg style="left:4.0px;top:2.0px" width="8" height="4.5"><path d="M0 4.5L4.0 0L8 4.5Z" fill="#9a9a9a"/></svg>
<svg style="left:4.0px;top:10.5px" width="8" height="4.5"><path d="M0 0L8 0L4.0 4.5Z" fill="#9a9a9a"/></svg>
<div class="" style="left:0.0px;top:8.0px;width:16.0px;height:1.0px;background:#9a9a9a"></div>
<span class="mono" style="left:21.0px;top:1.1px;color:#a8a8a8;">100%</span>
</div>
<div class="fd" style="left:1818.8px;top:505.0px;width:55.5px;height:19.0px">
<div class="gs" style="left:0;top:0;width:17.0px;height:17.0px;opacity:.55;"></div>
<svg style="left:4.0px;top:2.0px" width="8" height="4.5"><path d="M0 4.5L4.0 0L8 4.5Z" fill="#9a9a9a"/></svg>
<svg style="left:4.0px;top:10.5px" width="8" height="4.5"><path d="M0 0L8 0L4.0 4.5Z" fill="#9a9a9a"/></svg>
<div class="" style="left:0.0px;top:8.0px;width:16.0px;height:1.0px;background:#9a9a9a"></div>
<span class="mono" style="left:21.0px;top:1.1px;color:#a8a8a8;">100%</span>
</div>
<svg style="left:1894px;top:506px" width="15" height="18" fill="none" stroke="#9c9c9c" stroke-width="1.300"><rect x="4" y="3" width="7" height="12" rx="3.500" stroke-dasharray="2 1.500"/><path d="M0 9h3M12 9h3"/></svg>
<span class="t dis" style="left:1719.0px;top:535.6px;">对齐:</span>
<div class="" style="left:1749.7px;top:534.5px;width:24.3px;height:19.0px;background:#e0e0e0;border:1px solid #b4b4b4"><svg style="left:5px;top:4px" width="14" height="10" fill="none" stroke="#9a9a9a" stroke-width="1.200"><path d="M0 5h11M8 2l3 3l-3 3M13 1v8"/></svg></div>
<div class="" style="left:1773.0px;top:534.5px;width:24.3px;height:19.0px;background:#e0e0e0;border:1px solid #b4b4b4"><svg style="left:5px;top:4px" width="14" height="10" fill="none" stroke="#9a9a9a" stroke-width="1.200"><path d="M0 5h9M6 2l3 3l-3 3M2 1h11"/></svg></div>
<div class="hs" style="left:1693.0px;top:560.5px;width:221.0px;height:1.0px;"></div>
<span class="t " style="left:1694.8px;top:570.4px;">配置文件:</span>
<div class="f" style="left:1749.7px;top:568.5px;width:110.5px;height:19.5px">
<div class="g" style="right:0;top:0;width:16.0px;height:17.5px"></div>
<svg style="left:97.0px;top:6.2px" width="8" height="5"><path d="M0 0L8 0L4.0 5Z" fill="#111"/></svg>
<span class="t " style="left:63.0px;top:0.8px;">等比</span>
<div style="left:8px;top:7.500px;width:50px;height:2.500px;background:#333"></div>
</div>
<svg style="left:1870px;top:570px" width="16" height="16" fill="#c6c6c6" stroke="#b0b0b0"><path d="M1 3l6 5l-6 5ZM15 3l-6 5l6 5Z"/><path d="M8 0v16" stroke="#aaa"/></svg>
<svg style="left:1895px;top:570px" width="14" height="16" fill="#c6c6c6" stroke="#b0b0b0"><path d="M2 1l5 6l5-6ZM2 15l5-6l5 6Z"/><path d="M0 8h14" stroke="#aaa"/></svg>
<div class="" style="left:1690.0px;top:595.5px;width:230.0px;height:4.0px;background:#7c7c7c"></div>
<div class="" style="left:1690.0px;top:599.0px;width:230.0px;height:17.5px;background:linear-gradient(#a7a7a7,#979797);border-bottom:1px solid #8a8a8a"></div>
<div class="tab" style="left:1690.5px;top:599.0px;width:38.0px;height:17.5px">字符</div>
<div class="tab" style="left:1728.5px;top:599.0px;width:39.5px;height:17.5px">色板</div>
<div class="tab on" style="left:1768.0px;top:599.0px;width:57.0px;height:18.5px;border-left:1px solid #8a8a8a"><svg style="left:4px;top:4.500px" width="7" height="10"><path d="M3.500 0L6.500 4H.5ZM3.500 10L6.500 6H.5Z" fill="#333"/></svg><span style="position:absolute;left:14px;top:0">透明度</span></div>
<svg style="left:1901px;top:604.0px" width="15" height="9"><path d="M0 2.500h5L2.500 5.500Z" fill="#222"/><path d="M6.500 1h8M6.500 3.300h8M6.500 5.600h8M6.500 7.900h8" stroke="#555" stroke-width="1.100"/></svg>
<div class="btn" style="left:1695.400px;top:624px;width:85.500px;height:18px;border-radius:2px"></div>
<span class="t " style="left:1701.5px;top:625.0px;">正常</span>
<div class="" style="left:1764.0px;top:627.0px;width:1.0px;height:12.0px;background:#c2c2c2"></div>
<svg style="left:1768.5px;top:631.0px" width="8" height="5"><path d="M0 0L8 0L4.0 5Z" fill="#111"/></svg>
<span class="t " style="left:1797.0px;top:625.0px;">不透明度:</span>
<div class="f" style="left:1852.4px;top:624.0px;width:60.5px;height:18.0px">
<div class="g" style="right:0;top:0;width:15.0px;height:16.0px"></div>
<svg style="left:47.5px;top:5.5px" width="8" height="5"><path d="M0 0L8 0L4.0 5Z" fill="#111"/></svg>
<span class="mono" style="left:2.0px;top:0.6px;">100%</span>
</div>
<div class="hs" style="left:1693.0px;top:650.5px;width:221.0px;height:1.0px;"></div>
<div class="" style="left:1695.4px;top:659.0px;width:132.0px;height:54.5px;background:#d0d0d0;border:1px solid #8f8f8f;box-shadow:inset 0 0 0 2px #c9c9c9"></div>
<div class="" style="left:1697.5px;top:662.0px;width:49.0px;height:49.5px;background:#fff;border:1px solid #777"><svg style="left:0;top:0" width="47" height="47"><ellipse cx="23.500" cy="23.500" rx="21" ry="15" fill="none" stroke="#777" stroke-width="1.300"/></svg></div>
<div class="" style="left:1774.5px;top:662.0px;width:49.0px;height:49.5px;background:#dedede;border:1px solid #8a8a8a"><svg style="left:11px;top:11px" width="26" height="26"><circle cx="13" cy="13" r="10" fill="none" stroke="#3c3c3c" stroke-width="4"/><path d="M6 6L20 20" stroke="#3c3c3c" stroke-width="4"/></svg></div>
<div class="btn" style="left:1832.3px;top:657.5px;width:70.0px;height:18.5px;border-radius:2px;text-align:center;line-height:17px;color:#111">制作蒙版</div>
<div class="" style="left:1833.0px;top:685.0px;width:11.0px;height:11.0px;background:#e2e2e2;border:1px solid #b9b9b9"></div>
<span class="t dis" style="left:1849.0px;top:682.5px;">剪切</span>
<div class="" style="left:1833.0px;top:705.0px;width:11.0px;height:11.0px;background:#e2e2e2;border:1px solid #b9b9b9"></div>
<span class="t dis" style="left:1849.0px;top:702.5px;">反相蒙版</span>
<div class="" style="left:1690.0px;top:722.5px;width:230.0px;height:4.0px;background:#7c7c7c"></div>
<div class="" style="left:1690.0px;top:726.0px;width:230.0px;height:17.0px;background:linear-gradient(#a7a7a7,#979797);border-bottom:1px solid #8a8a8a"></div>
<div class="tab" style="left:1690.5px;top:726.0px;width:43.5px;height:17.0px">分色预</div>
<div class="tab" style="left:1734.0px;top:726.0px;width:32.4px;height:17.0px">外观</div>
<div class="tab" style="left:1766.4px;top:726.0px;width:31.9px;height:17.0px">图层</div>
<div class="tab on" style="left:1798.3px;top:726.0px;width:36.7px;height:18.0px;border-left:1px solid #8a8a8a">画板</div>
<div class="tab" style="left:1835.0px;top:726.0px;width:41.2px;height:17.0px">属性</div>
<svg style="left:1901px;top:731.0px" width="15" height="9"><path d="M0 2.500h5L2.500 5.500Z" fill="#222"/><path d="M6.500 1h8M6.500 3.300h8M6.500 5.600h8M6.500 7.900h8" stroke="#555" stroke-width="1.100"/></svg>
<div class="" style="left:1694.0px;top:749.5px;width:219.5px;height:140.0px;background:#d7d7d7;border:1px solid #8e8e8e"></div>
<div class="" style="left:1695.0px;top:750.5px;width:217.5px;height:18.0px;background:#c4d9f6;border-bottom:1px solid #a9bcd8"></div>
<div class="" style="left:1725.0px;top:750.5px;width:1.0px;height:18.0px;background:#a9b9d0"></div>
<div class="" style="left:1872.5px;top:750.5px;width:1.0px;height:18.0px;background:#a9b9d0"></div>
<span class="t " style="left:1701.0px;top:751.5px;font:10px 'Liberation Mono',monospace;line-height:16px">1</span>
<span class="t " style="left:1731.0px;top:751.5px;color:#111">画板 1</span>
<svg style="left:1879px;top:752px" width="17" height="15" fill="none" stroke="#333" stroke-width="1.100"><rect x="3.500" y="4" width="10" height="7" fill="#f0f0f0"/><path d="M0 4h17M0 11h17M3.500 1v13M13.500 1v13" stroke-width=".8"/></svg>
<div class="" style="left:1917.5px;top:64.0px;width:2.5px;height:821.0px;background:#9a9a9a"></div>
<div class="" style="left:1910.0px;top:863.5px;width:12.0px;height:24.0px;background:#474b5d;border-radius:4px 0 0 0"></div>
</div>
<svg style="position:absolute;left:0;top:0" width="1000" height="461" viewBox="0 0 1000 461"><defs><linearGradient id="ag" gradientUnits="userSpaceOnUse" x1="215" y1="144" x2="270" y2="166"><stop offset="0" stop-color="#97cb00"/><stop offset="1" stop-color="#97cb00" stop-opacity=".35"/></linearGradient></defs>
<path d="M23.7 69.4L36.5 68L35.9 70.7L58 79.2L70 84.3L110 100.6L150 117L190 133.4L230 149.5L269.8 165.6L270 166L230 151.7L190 136L150 120.5L110 105.5L70 90.1L58 85.3L33.3 76.4L32 78.3Z" fill="url(#ag)"/></svg>
</body></html>
